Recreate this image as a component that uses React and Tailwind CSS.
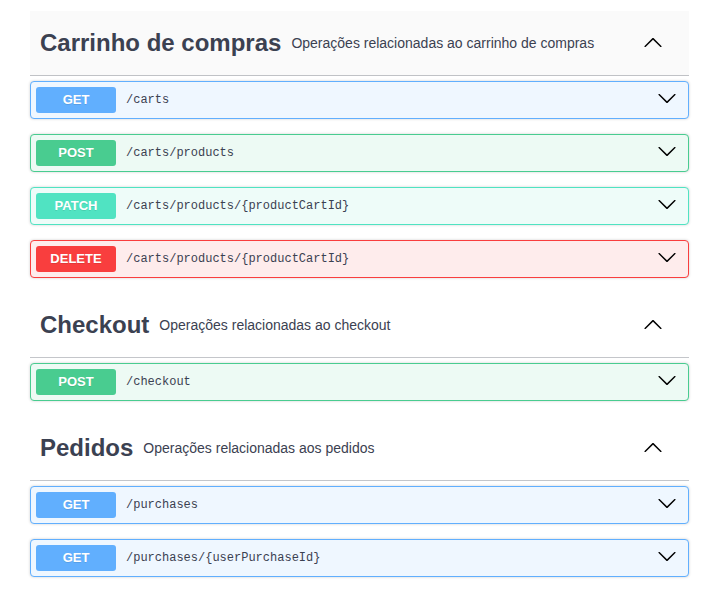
const sections = [
  {
    title: 'Carrinho de compras',
    description: 'Operações relacionadas ao carrinho de compras',
    hovered: true,
    ops: [
      { method: 'GET', path: '/carts' },
      { method: 'POST', path: '/carts/products' },
      { method: 'PATCH', path: '/carts/products/{productCartId}' },
      { method: 'DELETE', path: '/carts/products/{productCartId}' },
    ],
  },
  {
    title: 'Checkout',
    description: 'Operações relacionadas ao checkout',
    ops: [{ method: 'POST', path: '/checkout' }],
  },
  {
    title: 'Pedidos',
    description: 'Operações relacionadas aos pedidos',
    ops: [
      { method: 'GET', path: '/purchases' },
      { method: 'GET', path: '/purchases/{userPurchaseId}' },
    ],
  },
]

const METHOD_STYLES = {
  GET: { block: 'bg-[#eff7ff] border-[#61affe]', badge: 'bg-[#61affe]' },
  POST: { block: 'bg-[#edfaf4] border-[#49cc90]', badge: 'bg-[#49cc90]' },
  PATCH: { block: 'bg-[#eefcf9] border-[#50e3c2]', badge: 'bg-[#50e3c2]' },
  DELETE: { block: 'bg-[#feecec] border-[#f93e3e]', badge: 'bg-[#f93e3e]' },
}

function Arrow({ className }) {
  return (
    <svg width="20" height="20" viewBox="0 0 20 20" className={className} fill="#000">
      <path d="M17.418 6.109c.272-.268.709-.268.979 0s.271.701 0 .969l-7.908 7.83c-.27.268-.707.268-.979 0l-7.908-7.83c-.27-.268-.27-.701 0-.969.271-.268.709-.268.979 0L10 13.25l7.418-7.141z" />
    </svg>
  )
}

function Operation({ method, path }) {
  const styles = METHOD_STYLES[method]
  return (
    <div
      className={`mb-[15px] flex h-[38px] items-center rounded-[4px] border p-[5px] shadow-[0_0_3px_rgba(0,0,0,0.19)] ${styles.block}`}
    >
      <span
        className={`flex h-[26px] w-[80px] shrink-0 items-center justify-center rounded-[3px] text-[13px] font-bold text-white [text-shadow:0_1px_0_rgba(0,0,0,0.1)] ${styles.badge}`}
      >
        {method}
      </span>
      <span className="flex-1 pl-[10px] font-['Liberation_Mono',monospace] text-[12px] text-[#3b4151]">
        {path}
      </span>
      <Arrow className="mr-[6px] mb-[4px] shrink-0" />
    </div>
  )
}

function TagSection({ title, description, hovered, ops }) {
  return (
    <div>
      <div
        className={`mb-[5px] flex h-[65px] items-center border-b border-[#3b4151]/30 pl-[10px] ${
          hovered ? 'bg-[#fafafa]' : ''
        }`}
      >
        <h3 className="text-[24px] font-bold text-[#3b4151]">{title}</h3>
        <span className="flex-1 px-[10px] text-[14px] text-[#3b4151]">{description}</span>
        <Arrow className="mr-[26px] shrink-0 rotate-180" />
      </div>
      {ops.map((op, i) => (
        <Operation key={i} {...op} />
      ))}
    </div>
  )
}

export default function App() {
  return (
    <div className="min-h-screen bg-white font-['Liberation_Sans',Arial,sans-serif]">
      <div className="ml-[30px] w-[659px] pt-[11px]">
        {sections.map((s) => (
          <TagSection key={s.title} {...s} />
        ))}
      </div>
    </div>
  )
}
